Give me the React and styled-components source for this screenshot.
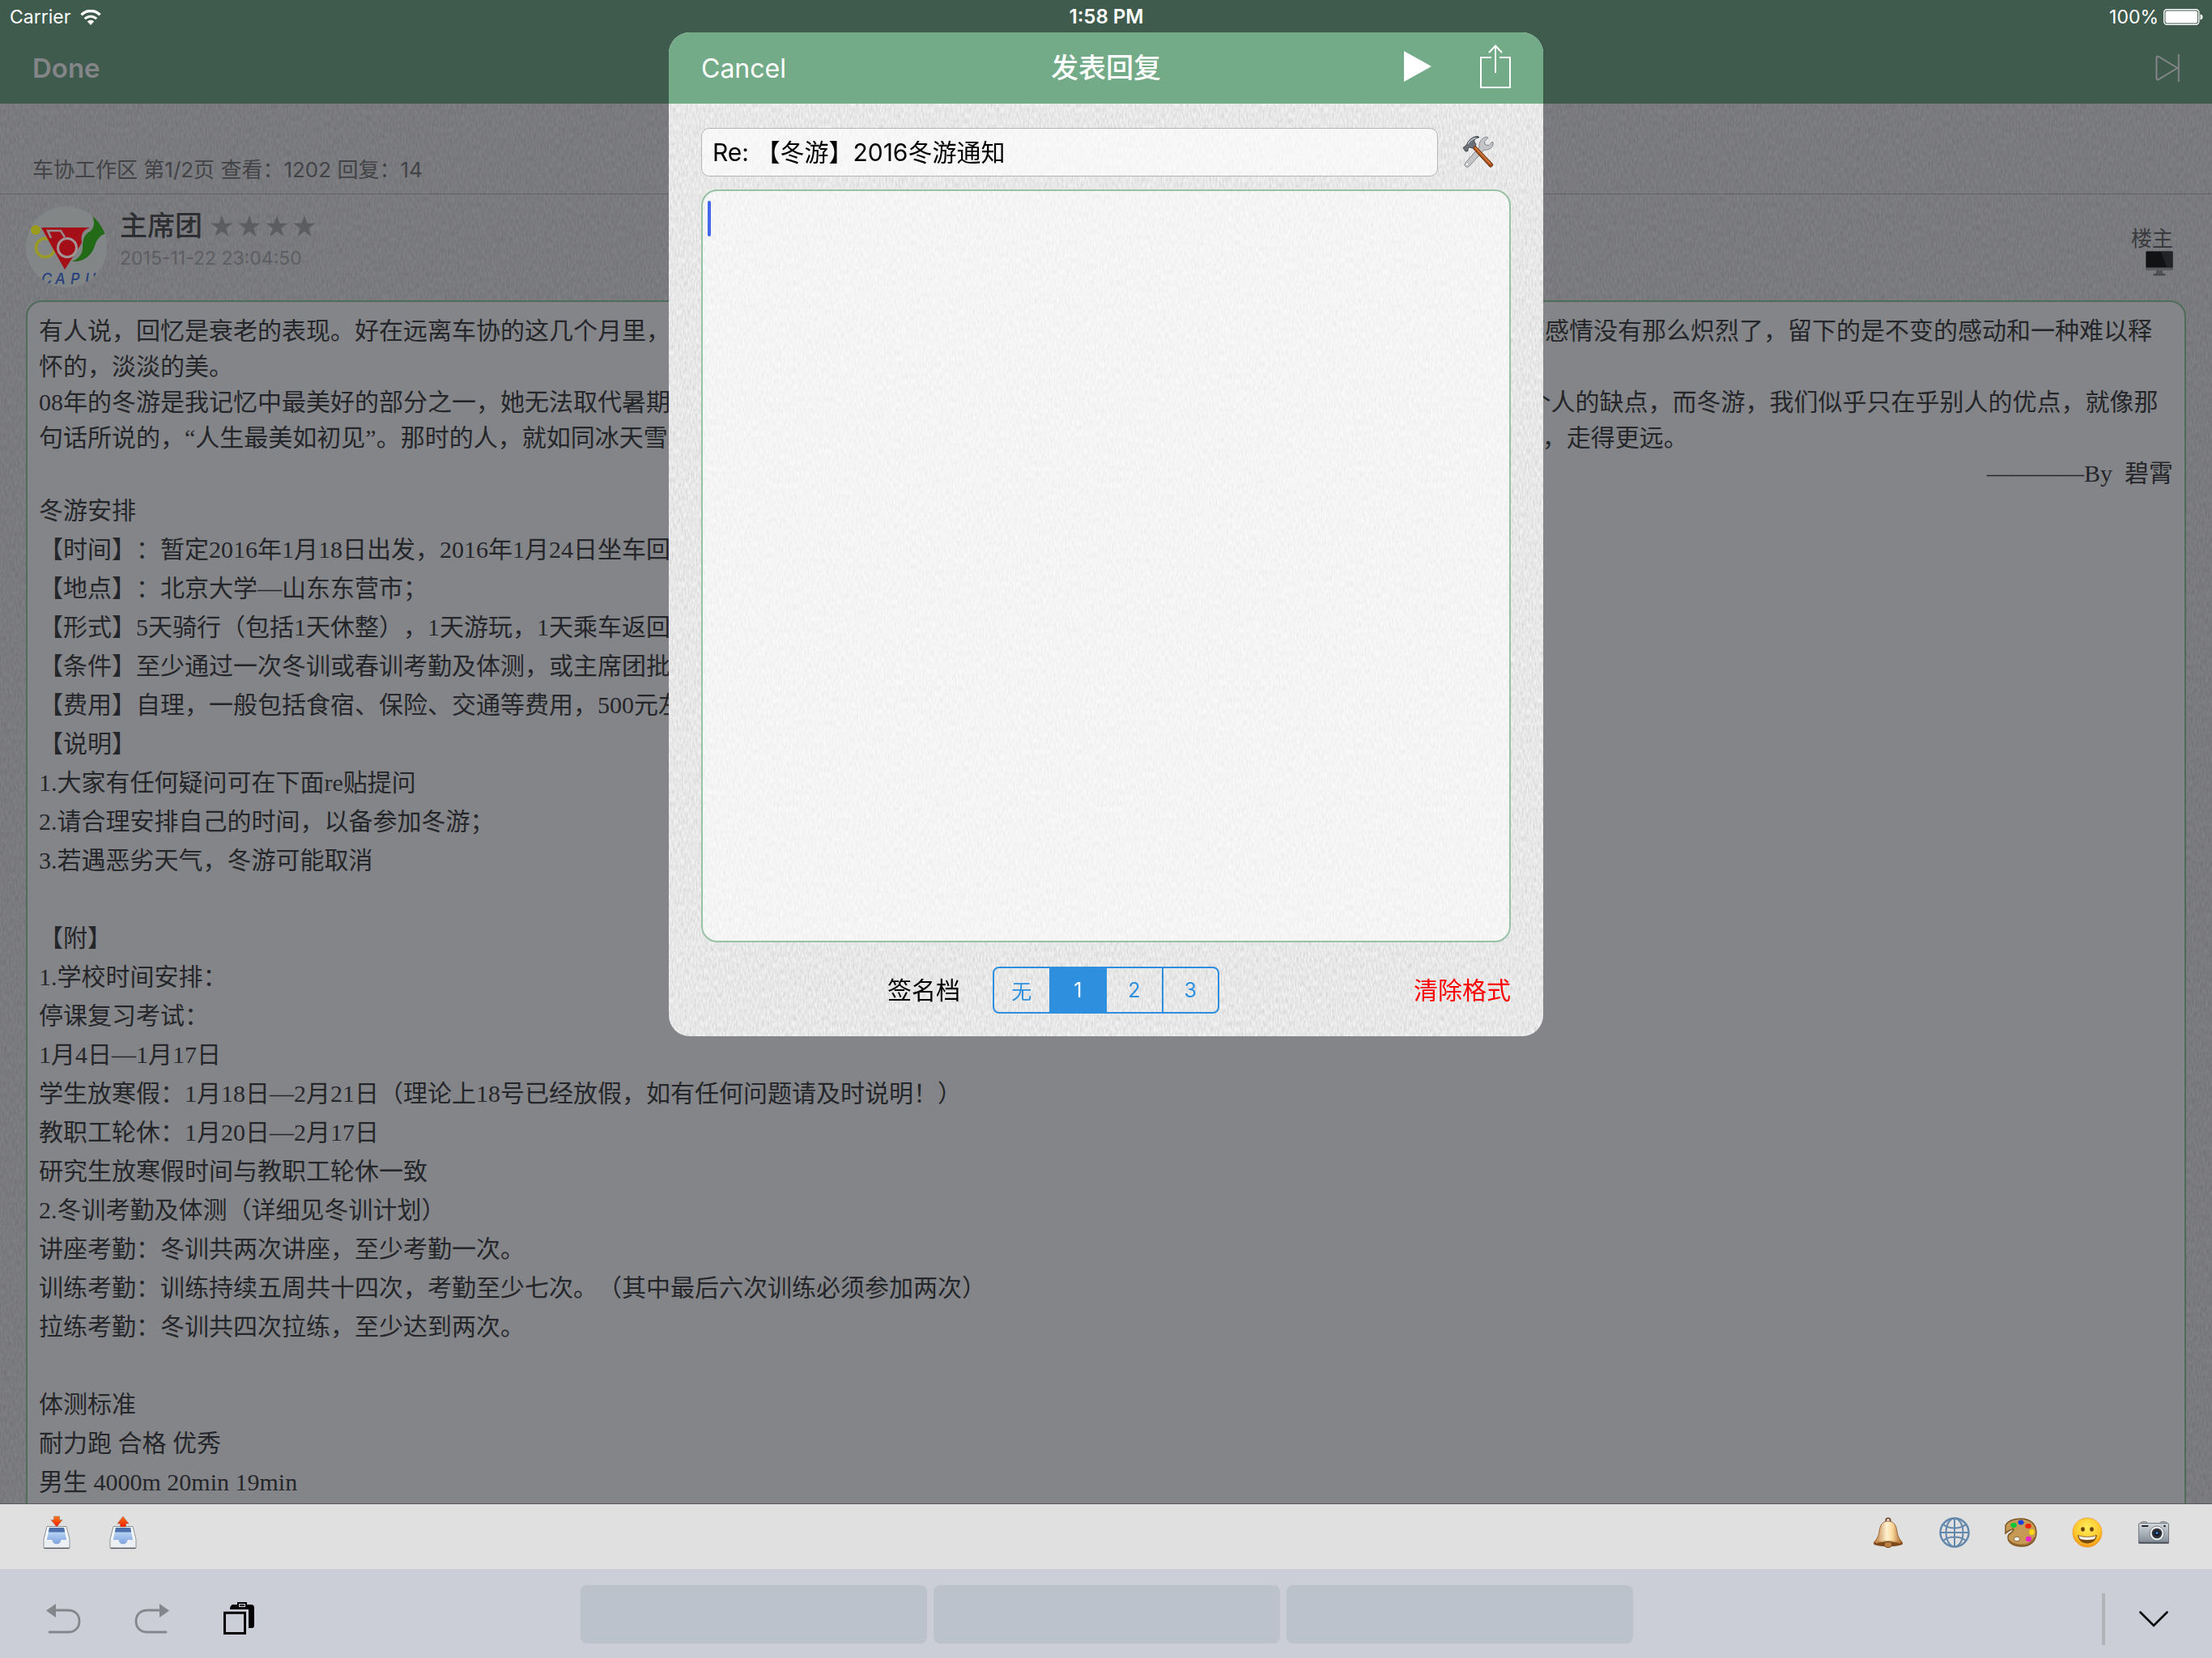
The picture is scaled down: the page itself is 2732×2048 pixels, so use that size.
import React from 'react';
import styled, { createGlobalStyle, css } from 'styled-components';

const sans = '"Inter", "Noto Sans CJK SC", sans-serif';
const serif = '"Liberation Serif", "Noto Sans CJK SC", serif';

const paper = `url("data:image/svg+xml,${encodeURIComponent(
  '<svg xmlns="http://www.w3.org/2000/svg" width="400" height="400"><filter id="n" x="0" y="0" width="100%" height="100%"><feTurbulence type="fractalNoise" baseFrequency="0.5 0.14" numOctaves="3" seed="7" stitchTiles="stitch"/><feColorMatrix values="0 0 0 0 0  0 0 0 0 0  0 0 0 0 0  0.2 0 0 0 -0.06"/></filter><rect width="400" height="400" filter="url(#n)"/></svg>'
)}")`;

const GlobalStyle = createGlobalStyle`
  *, *::before, *::after { box-sizing: border-box; }
  body { margin: 0; font-family: ${sans}; text-spacing-trim: space-all; }
  button, input, textarea { font-family: inherit; }
  svg { display: block; }
`;

const Screen = styled.div`
  height: 100vh;
  display: flex;
  flex-direction: column;
  overflow: hidden;
  background: #7f8084 ${paper};
`;

const TopBar = styled.header`
  flex: none;
  background: #3f5b4d;
`;

const StatusBar = styled.div`
  height: 40px;
  padding: 2px 11px 0 12px;
  display: grid;
  grid-template-columns: 1fr auto 1fr;
  align-items: center;
  color: #fff;
  font-size: 23px;
  line-height: 30px;
`;

const StatusGroup = styled.div`
  display: flex;
  align-items: center;
  justify-content: ${(p) => (p.$end ? 'flex-end' : 'flex-start')};
  gap: ${(p) => (p.$end ? '6px' : '12px')};
`;

const Clock = styled.time`
  font-size: 24px;
  font-weight: 600;
`;

const NavBar = styled.nav`
  height: 88px;
  padding: 0 40px;
  display: flex;
  align-items: center;
  justify-content: space-between;
`;

const PlainButton = styled.button`
  display: flex;
  align-items: center;
  justify-content: center;
  border: 0;
  padding: 0;
  background: none;
  color: inherit;
  font-size: inherit;
`;

const DoneButton = styled(PlainButton)`
  color: #848589;
  font-size: 33px;
  font-weight: 600;
`;

const Thread = styled.main`
  flex: 1;
  min-height: 0;
  overflow: hidden;
`;

const ThreadInfo = styled.p`
  margin: 0;
  padding: 62px 40px 9px;
  border-bottom: 1px solid #606165;
  font-size: 26px;
  line-height: 40px;
  color: #424346;
`;

const PostHeader = styled.div`
  display: flex;
  gap: 16px;
  padding: 15px 48px 16px 32px;
`;

const Author = styled.div`
  flex: 1;
`;

const NameRow = styled.div`
  display: flex;
  align-items: center;
  gap: 10px;
  height: 48px;
`;

const AuthorName = styled.h2`
  margin: 0;
  font-size: 34px;
  line-height: 48px;
  font-weight: 500;
  color: #2d2e31;
`;

const Stars = styled.div`
  display: flex;
  gap: 6px;
`;

const PostDate = styled.time`
  display: block;
  font-size: 23px;
  line-height: 32px;
  color: #5d5e62;
`;

const Floor = styled.div`
  display: flex;
  flex-direction: column;
  align-items: flex-end;
  padding-top: 24px;
  font-size: 26px;
  line-height: 31px;
  color: #38393c;
`;

const PostCard = styled.article`
  margin: 0 32px;
  min-height: 100%;
  padding: 14px;
  border: 2px solid #4f6c5b;
  border-radius: 20px;
  background: #848589;
  font-family: ${serif};
  font-size: 30px;
  color: #252629;
`;

const Line = styled.p`
  margin: 0;
  min-height: 48px;
  line-height: 48px;
  ${(p) => p.$tight && css`min-height: 44px; line-height: 44px;`}
  ${(p) => p.$right && css`text-align: right;`}
`;

const ModalLayer = styled.div`
  position: fixed;
  inset: 40px 0 auto;
  display: flex;
  justify-content: center;
`;

const Dialog = styled.form`
  width: 1080px;
  max-width: 100%;
  overflow: hidden;
  border-radius: 26px;
  background: #f1f1f1 ${paper};
`;

const DialogHeader = styled.header`
  height: 88px;
  padding: 0 40px;
  display: grid;
  grid-template-columns: 1fr auto 1fr;
  align-items: center;
  background: #73ab88;
  color: #fff;
  font-size: 32px;
`;

const DialogTitle = styled.h1`
  margin: 0;
  font-size: 34px;
  line-height: 48px;
  font-weight: 500;
`;

const HeaderActions = styled.div`
  display: flex;
  justify-content: flex-end;
  align-items: center;
  gap: 60px;
  padding-bottom: 4px;
`;

const CancelButton = styled(PlainButton)`
  justify-self: start;
`;

const DialogBody = styled.div`
  padding: 30px 40px 28px;
  display: flex;
  flex-direction: column;
`;

const SubjectRow = styled.div`
  display: flex;
  align-items: center;
  gap: 30px;
  padding-right: 20px;
`;

const SubjectInput = styled.input`
  flex: 1;
  min-width: 0;
  height: 60px;
  padding: 0 14px 4px 13px;
  border: 1px solid #b4b4b4;
  border-radius: 10px;
  background: rgba(255, 255, 255, 0.65);
  font-size: 30px;
  color: #000;
  outline: none;
`;

const EditorWrap = styled.div`
  position: relative;
  display: flex;
  margin: 16px 0 30px;
`;

const Editor = styled.textarea`
  flex: 1;
  height: 930px;
  padding: 12px;
  border: 2px solid #98c1a6;
  border-radius: 20px;
  background: rgba(255, 255, 255, 0.55);
  font-size: 30px;
  line-height: 44px;
  resize: none;
  outline: none;
`;

const Caret = styled.span`
  position: absolute;
  left: 8px;
  top: 14px;
  width: 4px;
  height: 44px;
  border-radius: 2px;
  background: #4169ea;
`;

const Footer = styled.div`
  display: grid;
  grid-template-columns: 1fr auto 1fr;
  align-items: center;
  font-size: 30px;
`;

const SignatureLabel = styled.span`
  justify-self: end;
  padding: 0 40px 4px 0;
  color: #000;
`;

const Segments = styled.div`
  display: flex;
  width: 280px;
  height: 58px;
  border: 2px solid #2d8fdd;
  border-radius: 8px;
  overflow: hidden;
`;

const Segment = styled.label`
  flex: 1;
  display: flex;
  align-items: center;
  justify-content: center;
  font-size: 25px;
  color: #2d8fdd;
  & + & { border-left: 2px solid #2d8fdd; }
  input { appearance: none; position: absolute; margin: 0; width: 0; height: 0; }
  &:has(input:checked) { background: #2d8fdd; color: #fff; }
`;

const ClearButton = styled(PlainButton)`
  justify-self: end;
  padding-bottom: 4px;
  color: #f00;
`;

const Toolbar = styled.div`
  position: relative;
  flex: none;
  height: 81px;
  padding: 0 52px 0 50px;
  display: flex;
  align-items: flex-start;
  justify-content: space-between;
  border-top: 1px solid #55565a;
  background: #e0e0e1;
`;

const ToolGroup = styled.div`
  display: flex;
  gap: 42px;
`;

const ToolButton = styled(PlainButton)`
  width: 40px;
  height: 70px;
`;

const KeyboardBar = styled.div`
  position: relative;
  flex: none;
  height: 110px;
  padding: 2px 54px 0 56px;
  display: grid;
  grid-template-columns: 1fr auto 1fr;
  align-items: center;
  background: #cbced7;
`;

const EditGroup = styled.div`
  display: flex;
  align-items: center;
  padding-top: 10px;
  gap: 66px;
`;

const HideGroup = styled.div`
  display: flex;
  align-items: center;
  justify-content: flex-end;
  gap: 42px;
  padding-top: 12px;
`;

const Divider = styled.span`
  width: 4px;
  height: 64px;
  background: #b1b4b9;
`;

const Suggestions = styled.div`
  display: flex;
  gap: 8px;
`;

const Suggestion = styled(PlainButton)`
  width: 428px;
  height: 72px;
  border-radius: 8px;
  background: #bbc2cb;
`;

const WifiIcon = () => (
  <svg width="26" height="19" viewBox="0 0 26 19" fill="none" stroke="#fff">
    <path d="M1.500 6.400a16 16 0 0 1 23 0" strokeWidth="3.400" />
    <path d="M5.800 11.200a10 10 0 0 1 14.400 0" strokeWidth="3" />
    <path d="M13 19l-4.200-4.600a6 6 0 0 1 8.400 0z" fill="#fff" stroke="none" />
  </svg>
);

const BatteryIcon = () => (
  <svg width="49" height="20" viewBox="0 0 49 20">
    <rect x="0.800" y="0.800" width="43" height="18.400" rx="3.500" fill="none" stroke="#fff" strokeWidth="1.400" />
    <rect x="2.500" y="2.500" width="39.600" height="15" rx="2" fill="#fff" />
    <path d="M45.500 6.500c2 .4 3 1.800 3 3.500s-1 3.100-3 3.500z" fill="#fff" />
  </svg>
);

const NextIcon = () => (
  <svg width="30" height="34" viewBox="0 0 30 34" fill="none" stroke="#848589" strokeWidth="2">
    <path d="M1.500 4v26c0 1.500 1.200 2 2.400 1.200L27.500 17 3.900 2.800C2.700 2 1.500 2.500 1.500 4z" strokeLinejoin="round" />
    <path d="M28.800 0v34" />
  </svg>
);

const PlayIcon = () => (
  <svg width="34" height="38" viewBox="0 0 34 38"><path d="M0 0l34 19L0 38z" fill="#fff" /></svg>
);

const ShareIcon = () => (
  <svg width="38" height="54" viewBox="0 0 38 54" fill="none" stroke="#fff" strokeWidth="2">
    <path d="M14 16H1v37h36V16H24" />
    <path d="M19 35V1.500M11 10l8-8.500L27 10" />
  </svg>
);

const StarIcon = () => (
  <svg width="28" height="28" viewBox="0 0 28 28">
    <path d="M14 1l3.400 9.700H27.500l-8.300 6.200 3.200 10L14 20.800l-8.400 6.100 3.200-10-8.300-6.200h10.100z" fill="#5c5d61" />
  </svg>
);

const Avatar = () => (
  <svg width="100" height="100" viewBox="0 0 100 100" role="img" aria-label="CAPU">
    <defs><clipPath id="avatarClip"><circle cx="50" cy="50" r="50" /></clipPath></defs>
    <g clipPath="url(#avatarClip)">
      <rect width="100" height="100" fill="#828687" />
      <path d="M80 8c8 3 16 12 20 25-9 2-13 9-15 16-4 12-14 20-28 19 9-4 13-10 13-17 0-12 3-17 9-20 6-4 7-14 1-23z" fill="#236a17" />
      <circle cx="12" cy="29" r="6" fill="#9a9a1c" />
      <circle cx="24" cy="51" r="11.500" fill="none" stroke="#9b9b22" strokeWidth="3.500" />
      <path d="M19 26h60c-11 4-11 11-10 19L48 78z" fill="#a40f17" />
      <path d="M31 39l-4-9h16l5 8" fill="none" stroke="#948c8d" strokeWidth="2.500" />
      <circle cx="51" cy="51" r="11.500" fill="#a40f17" stroke="#a29394" strokeWidth="3" />
      <text x="19 36 55 73" y="96" fontFamily="Inter" fontSize="18" fontStyle="italic" fontWeight="500" fill="#26417c">CAPU</text>
    </g>
  </svg>
);

const MonitorIcon = () => (
  <svg width="34" height="32" viewBox="0 0 34 32">
    <rect x="0" y="0" width="34" height="24" rx="1.500" fill="#5c5d60" />
    <rect x="0.500" y="0.500" width="33" height="20" rx="1" fill="#111214" />
    <path d="M19 1h14v19h-7z" fill="#222326" />
    <path d="M13 24h8v4h-8z" fill="#515255" />
    <rect x="9.500" y="28" width="15" height="2.500" rx="1" fill="#48494c" />
  </svg>
);

const ToolsIcon = () => (
  <svg width="40" height="40" viewBox="0 0 40 40">
    <path d="M3.500 33.500L21 14c-1-6 3-12 9-13l2 1-4.500 4.500 1 4.500 4.500.5L37 7l1 1c.5 6-5 10-11 9L9 37c-3 3-8-.5-5.500-3.500z" fill="#c3c5c8" stroke="#85888b" strokeWidth="1" />
    <circle cx="6" cy="35" r="1.300" fill="#f1f1f1" />
    <path d="M13 15l3-3 21.500 22.500c1 2-1.500 4.500-3.500 3.500z" fill="#a9501a" stroke="#5f2b0b" strokeWidth="1" />
    <path d="M16 14l19 20.500" stroke="#d87f40" strokeWidth="1.200" />
    <path d="M1 14.500l4-3C7 6 12 0 20 .5l.5 1.500c-4 .5-6 2.500-5.500 5l2 4-4 4-4-1-2 1 0 3.500-3 .5z" fill="#6b7177" stroke="#43484d" strokeWidth="1" />
    <path d="M7 10c2-4 6-7 10-7.500" stroke="#b8bec4" strokeWidth="1.500" fill="none" />
  </svg>
);

const TrayIcon = ({ up }) => (
  <svg width="34" height="42" viewBox="0 0 34 42">
    <defs>
      <linearGradient id="arrowRed" x1="0" y1="0" x2="0" y2="1"><stop offset="0" stopColor="#ff7a1a" /><stop offset="1" stopColor="#f01800" /></linearGradient>
      <linearGradient id="trayBlue" x1="0" y1="0" x2="0" y2="1"><stop offset="0" stopColor="#4c70ad" /><stop offset="0.300" stopColor="#b5d0f2" /><stop offset="1" stopColor="#7da2dd" /></linearGradient>
    </defs>
    <path d="M5 13.500h24l4 16v10.500H1V29.500z" fill="#f8f9fa" stroke="#8d9094" strokeWidth="1" />
    <path d="M8 15h18l3.500 16h-7c-1 6-10 6-11 0h-7z" fill="url(#trayBlue)" />
    <path d="M8 15h18l1.200 5.500H6.800z" fill="#4d70aa" />
    <path d="M2 30h9.500c0 3 2.500 5.500 5.500 5.500s5.500-2.500 5.500-5.500H32v9H2z" fill="#edf0f3" />
    <path d="M1.500 40.500h31" stroke="#55585c" strokeWidth="1.200" />
    <path d={up ? 'M17 1l7 9H20.500v4h-7v-4H10z' : 'M13.500 1h7v4.500H24L17 14 10 5.500h3.500z'} fill="url(#arrowRed)" stroke="#8a6a5a" strokeWidth="0.500" />
  </svg>
);

const BellIcon = () => (
  <svg width="38" height="38" viewBox="0 0 38 38">
    <defs><linearGradient id="bellGold"><stop offset="0" stopColor="#b9702f" /><stop offset="0.450" stopColor="#fff1d2" /><stop offset="0.650" stopColor="#fbd79c" /><stop offset="1" stopColor="#9c5519" /></linearGradient></defs>
    <circle cx="19" cy="4" r="2.800" fill="none" stroke="#6b3d16" strokeWidth="1.600" />
    <path d="M19 5c-7 0-10 5-11 13-1 7-4 10-7 14 6 3 30 3 36 0-3-4-6-7-7-14C29 10 26 5 19 5z" fill="url(#bellGold)" stroke="#8a4f1b" strokeWidth="0.800" />
    <path d="M1 32.500c4-4 32-4 36 0 0 5-36 5-36 0z" fill="#7d4a1b" />
    <path d="M4 32c6-2.500 24-2.500 30 0" stroke="#d29a55" fill="none" />
    <ellipse cx="19" cy="34" rx="5" ry="3.500" fill="#b98242" stroke="#5d340f" strokeWidth="0.800" />
  </svg>
);

const GlobeIcon = () => (
  <svg width="38" height="38" viewBox="0 0 38 38" fill="none" stroke="#6488ab" strokeWidth="2">
    <circle cx="19" cy="19" r="17.500" strokeWidth="2.400" />
    <ellipse cx="19" cy="19" rx="10.500" ry="17.500" />
    <path d="M19 1v36M1.500 19h35M5 9c7 6 21 6 28 0M5 29c7-6 21-6 28 0" />
  </svg>
);

const PaletteIcon = () => (
  <svg width="40" height="36" viewBox="0 0 40 36">
    <path d="M1 9C5 2 13 1 20 1c12 0 19 7 19 17 0 11-8 17-18 17C11 35 4 31 4 24c0-3 1-4 3-5s4-4 4-5c-1-2-2 1-4 1-3 1-5 3-6 4z" fill="#c69a55" stroke="#7b5320" strokeWidth="1.400" />
    <path d="M5 27c4 7 24 11 32-3" stroke="#8f652c" strokeWidth="1.500" fill="none" />
    <ellipse cx="15" cy="26" rx="3.600" ry="2.800" fill="#f4f2ee" stroke="#7b5320" strokeWidth="0.800" />
    <ellipse cx="11" cy="9" rx="3.800" ry="3" fill="#08c832" />
    <ellipse cx="20" cy="5.500" rx="3.600" ry="3" fill="#1740e6" />
    <ellipse cx="29" cy="10" rx="3.800" ry="3" fill="#f42507" />
    <ellipse cx="33.500" cy="17.500" rx="3.200" ry="3.600" fill="#fbd80f" />
    <ellipse cx="29.500" cy="26" rx="3.600" ry="3.300" fill="#ed22cf" />
  </svg>
);

const SmileIcon = () => (
  <svg width="38" height="38" viewBox="0 0 38 38">
    <defs><radialGradient id="smileGold" cx="0.500" cy="0.350" r="0.650"><stop offset="0" stopColor="#ffee5c" /><stop offset="0.700" stopColor="#fec52b" /><stop offset="1" stopColor="#f39317" /></radialGradient></defs>
    <circle cx="19" cy="19" r="18" fill="url(#smileGold)" stroke="#ee9a29" strokeWidth="0.800" />
    <ellipse cx="13.500" cy="15" rx="2.400" ry="2.800" fill="#6b4310" />
    <ellipse cx="24.500" cy="15" rx="2.400" ry="2.800" fill="#6b4310" />
    <path d="M7 22c7 2.500 17 2.500 24 0-1 7-6 10.500-12 10.500S8 29 7 22z" fill="#774a0c" />
    <path d="M8.500 23.300c7 2 14 2 21 0-.5 2-1 3-2 3.700-5 1.500-12 1.500-17 0-1-.7-1.500-2-2-3.700z" fill="#fff" />
  </svg>
);

const CameraIcon = () => (
  <svg width="38" height="28" viewBox="0 0 38 28">
    <defs><linearGradient id="camBody" x1="0" y1="0" x2="0" y2="1"><stop offset="0" stopColor="#d3d8dc" /><stop offset="1" stopColor="#7e8893" /></linearGradient></defs>
    <path d="M3 2c0-2 8-2 8 0v1H3zM27 2c0-2 8-2 8 0v1h-8z" fill="#b6bbc0" stroke="#62676c" strokeWidth="0.800" />
    <rect x="0.500" y="2.500" width="37" height="25" rx="1.500" fill="url(#camBody)" stroke="#737a81" strokeWidth="1" />
    <path d="M0 26.500h38" stroke="#4c5259" strokeWidth="1.400" />
    <rect x="4" y="5" width="8.500" height="2" rx="1" fill="#24282c" />
    <circle cx="32.500" cy="6" r="1.300" fill="#24282c" />
    <circle cx="23" cy="15" r="9" fill="#e6e9eb" stroke="#6e757c" strokeWidth="0.800" />
    <circle cx="23" cy="15" r="6.300" fill="#2c3238" />
    <circle cx="23" cy="15" r="3.300" fill="#0f1726" />
    <circle cx="23" cy="14.500" r="1.600" fill="#4787de" />
  </svg>
);

const UndoIcon = ({ flip }) => (
  <svg width="44" height="38" viewBox="0 0 44 38" fill="none">
    <g transform={flip ? 'matrix(-1 0 0 1 44 0)' : undefined}>
      <path d="M12 9h16c8 0 14 5 14 13.500S36 36 28 36H5" stroke="#85868b" strokeWidth="2.800" strokeLinecap="round" />
      <path d="M1 9.500L13 1v17z" fill="#85868b" />
    </g>
  </svg>
);

const PasteIcon = () => (
  <svg width="38" height="40" viewBox="0 0 38 40">
    <path d="M8 8c0-3 2-5 4-5h5V0h12v3h5c3 0 4 2 4 4v22c0 2-1 3-3 3h-4V9H8z" fill="#000" />
    <rect x="19.500" y="2.500" width="7" height="3" fill="none" stroke="#cbced7" strokeWidth="1" />
    <rect x="1.500" y="13.200" width="25" height="25.300" fill="none" stroke="#000" strokeWidth="3" />
  </svg>
);

const ChevronIcon = () => (
  <svg width="36" height="20" viewBox="0 0 36 20"><path d="M1.500 1.500L18 18 34.500 1.500" fill="none" stroke="#000" strokeWidth="2.600" strokeLinecap="round" /></svg>
);

const intro = [
  '有人说，回忆是衰老的表现。好在远离车协的这几个月里，也许是时间冲淡了许多东西，那些曾经的激动与热情都慢慢沉淀下来，回头再看那感情没有那么炽烈了，留下的是不变的感动和一种难以释怀的，淡淡的美。',
  '08年的冬游是我记忆中最美好的部分之一，她无法取代暑期远征在我心中的位置，但那种单纯的快乐却是独一无二的。 长途中我们会看到每个人的缺点，而冬游，我们似乎只在乎别人的优点，就像那句话所说的，“人生最美如初见”。那时的人，就如同冰天雪地里的阳光一样温暖，没有猜疑也没有隔阂，大家只是相互扶持着向前骑，看得多，走得更远。',
];

const details = [
  '【时间】：暂定2016年1月18日出发，2016年1月24日坐车回京；',
  '【地点】：北京大学—山东东营市；',
  '【形式】5天骑行（包括1天休整），1天游玩，1天乘车返回；',
  '【条件】至少通过一次冬训或春训考勤及体测，或主席团批准；',
  '【费用】自理，一般包括食宿、保险、交通等费用，500元左右；',
  '【说明】',
  '1.大家有任何疑问可在下面re贴提问',
  '2.请合理安排自己的时间，以备参加冬游；',
  '3.若遇恶劣天气，冬游可能取消',
  '',
  '【附】',
  '1.学校时间安排：',
  '停课复习考试：',
  '1月4日—1月17日',
  '学生放寒假：1月18日—2月21日（理论上18号已经放假，如有任何问题请及时说明！）',
  '教职工轮休：1月20日—2月17日',
  '研究生放寒假时间与教职工轮休一致',
  '2.冬训考勤及体测（详细见冬训计划）',
  '讲座考勤：冬训共两次讲座，至少考勤一次。',
  '训练考勤：训练持续五周共十四次，考勤至少七次。（其中最后六次训练必须参加两次）',
  '拉练考勤：冬训共四次拉练，至少达到两次。',
  '',
  '体测标准',
  '耐力跑 合格 优秀',
  '男生 4000m 20min 19min',
];

const insertTools = [
  ['提醒', BellIcon],
  ['链接', GlobeIcon],
  ['颜色', PaletteIcon],
  ['表情', SmileIcon],
  ['图片', CameraIcon],
];

export default function App() {
  return (
    <>
      <GlobalStyle />
      <Screen>
        <TopBar>
          <StatusBar>
            <StatusGroup>Carrier <WifiIcon /></StatusGroup>
            <Clock>1:58 PM</Clock>
            <StatusGroup $end>100% <BatteryIcon /></StatusGroup>
          </StatusBar>
          <NavBar>
            <DoneButton type="button">Done</DoneButton>
            <PlainButton type="button" aria-label="Next page"><NextIcon /></PlainButton>
          </NavBar>
        </TopBar>

        <Thread>
          <ThreadInfo>车协工作区 第1/2页 查看：1202 回复：14</ThreadInfo>
          <PostHeader>
            <Avatar />
            <Author>
              <NameRow>
                <AuthorName>主席团</AuthorName>
                <Stars>{[1, 2, 3, 4].map((n) => <StarIcon key={n} />)}</Stars>
              </NameRow>
              <PostDate>2015-11-22 23:04:50</PostDate>
            </Author>
            <Floor>楼主<MonitorIcon /></Floor>
          </PostHeader>
          <PostCard>
            {intro.map((text) => <Line $tight key={text}>{text}</Line>)}
            <Line $tight $right>————By&nbsp;&nbsp;碧霄</Line>
            <Line>冬游安排</Line>
            {details.map((text, i) => <Line key={i}>{text}</Line>)}
          </PostCard>
        </Thread>

        <Toolbar>
          <ToolGroup>
            <ToolButton type="button" aria-label="载入草稿"><TrayIcon /></ToolButton>
            <ToolButton type="button" aria-label="保存草稿"><TrayIcon up /></ToolButton>
          </ToolGroup>
          <ToolGroup>
            {insertTools.map(([name, Icon]) => (
              <ToolButton type="button" key={name} aria-label={name}><Icon /></ToolButton>
            ))}
          </ToolGroup>
        </Toolbar>

        <KeyboardBar>
          <EditGroup>
            <PlainButton type="button" aria-label="Undo"><UndoIcon /></PlainButton>
            <PlainButton type="button" aria-label="Redo"><UndoIcon flip /></PlainButton>
            <PlainButton type="button" aria-label="Paste"><PasteIcon /></PlainButton>
          </EditGroup>
          <Suggestions>
            {[1, 2, 3].map((n) => <Suggestion type="button" key={n} aria-label={`Suggestion ${n}`} />)}
          </Suggestions>
          <HideGroup>
            <Divider />
            <PlainButton type="button" aria-label="Hide keyboard"><ChevronIcon /></PlainButton>
          </HideGroup>
        </KeyboardBar>
      </Screen>

      <ModalLayer>
        <Dialog role="dialog" aria-labelledby="reply-title">
          <DialogHeader>
            <CancelButton type="button">Cancel</CancelButton>
            <DialogTitle id="reply-title">发表回复</DialogTitle>
            <HeaderActions>
              <PlainButton type="submit" aria-label="发送"><PlayIcon /></PlainButton>
              <PlainButton type="button" aria-label="分享"><ShareIcon /></PlainButton>
            </HeaderActions>
          </DialogHeader>
          <DialogBody>
            <SubjectRow>
              <SubjectInput aria-label="标题" defaultValue="Re: 【冬游】2016冬游通知" />
              <PlainButton type="button" aria-label="工具"><ToolsIcon /></PlainButton>
            </SubjectRow>
            <EditorWrap>
              <Editor aria-label="正文" />
              <Caret />
            </EditorWrap>
            <Footer>
              <SignatureLabel id="signature-label">签名档</SignatureLabel>
              <Segments role="radiogroup" aria-labelledby="signature-label">
                {['无', '1', '2', '3'].map((s) => (
                  <Segment key={s}>
                    <input type="radio" name="signature" value={s} defaultChecked={s === '1'} />
                    {s}
                  </Segment>
                ))}
              </Segments>
              <ClearButton type="button">清除格式</ClearButton>
            </Footer>
          </DialogBody>
        </Dialog>
      </ModalLayer>
    </>
  );
}
